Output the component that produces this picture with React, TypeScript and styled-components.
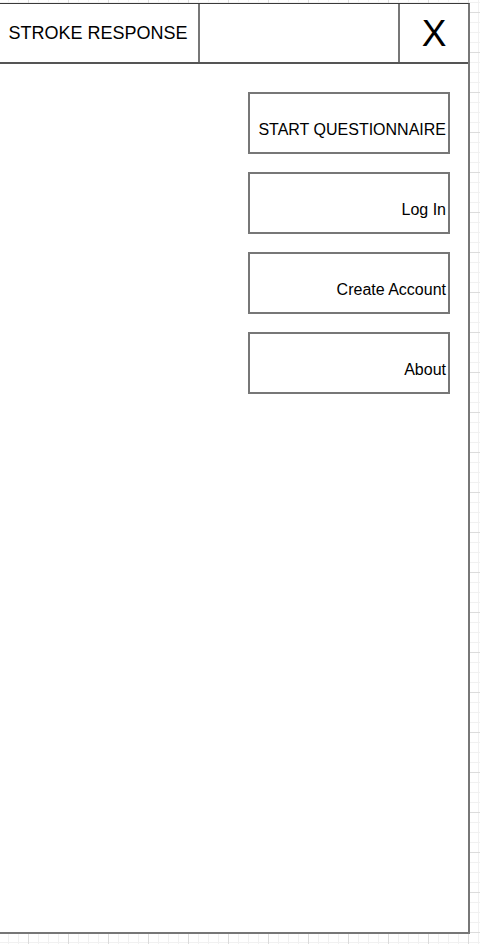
import React from 'react'
import styled, { createGlobalStyle } from 'styled-components'

const colors = {
  frame: '#777777',
  dark: '#3a3a3a',
  gridMinor: '#f1f1f1',
  gridMajor: '#dcdcdc',
  text: '#000000',
}

const GlobalStyle = createGlobalStyle`
  html, body {
    margin: 0;
    padding: 0;
    width: 480px;
    height: 944px;
    overflow: hidden;
    font-family: "Liberation Sans", Arial, Helvetica, sans-serif;
    background-color: #ffffff;
    background-image:
      linear-gradient(to right, ${colors.gridMajor} 1px, transparent 1px),
      linear-gradient(to bottom, ${colors.gridMajor} 1px, transparent 1px),
      linear-gradient(to right, ${colors.gridMinor} 1px, transparent 1px),
      linear-gradient(to bottom, ${colors.gridMinor} 1px, transparent 1px);
    background-size: 40px 40px, 40px 40px, 10px 10px, 10px 10px;
    background-position: 28px 12px, 28px 12px, 8px 2px, 8px 2px;
  }
`

const Page = styled.div`
  padding-top: 3px;
`

const Frame = styled.div`
  box-sizing: border-box;
  margin-left: -2px;
  width: 472px;
  height: 931px;
  background: #ffffff;
  border-top: 1px solid ${colors.dark};
  border-right: 2px solid ${colors.frame};
  border-bottom: 2px solid ${colors.frame};
  display: flex;
  flex-direction: column;
`

const Header = styled.div`
  display: flex;
  height: 60px;
  border-bottom: 2px solid #555555;
  box-sizing: border-box;
`

const HeaderCell = styled.div<{ $w: number; $divider?: boolean }>`
  box-sizing: border-box;
  width: ${({ $w }) => $w}px;
  flex: none;
  display: flex;
  align-items: center;
  justify-content: center;
  ${({ $divider }) => $divider && `border-right: 2px solid ${colors.frame};`}
`

const Title = styled.span`
  font-size: 18px;
  color: ${colors.text};
`

const Close = styled.span`
  font-size: 37px;
  line-height: 1;
  color: ${colors.text};
`

const Menu = styled.nav`
  display: flex;
  flex-direction: column;
  align-items: flex-end;
  gap: 18px;
  padding-top: 28px;
  padding-right: 18px;
`

const MenuButton = styled.div`
  box-sizing: border-box;
  width: 202px;
  height: 62px;
  border: 2px solid ${colors.frame};
  display: flex;
  align-items: center;
  justify-content: flex-end;
  padding: 13px 2px 0 0;
  font-size: 16px;
  color: ${colors.text};
  white-space: nowrap;
`

const items = ['START QUESTIONNAIRE', 'Log In', 'Create Account', 'About']

export default function App() {
  return (
    <Page>
      <GlobalStyle />
      <Frame>
        <Header>
          <HeaderCell $w={202} $divider>
            <Title>STROKE RESPONSE</Title>
          </HeaderCell>
          <HeaderCell $w={200} $divider />
          <HeaderCell $w={68}>
            <Close>X</Close>
          </HeaderCell>
        </Header>
        <Menu>
          {items.map((label) => (
            <MenuButton key={label}>{label}</MenuButton>
          ))}
        </Menu>
      </Frame>
    </Page>
  )
}
